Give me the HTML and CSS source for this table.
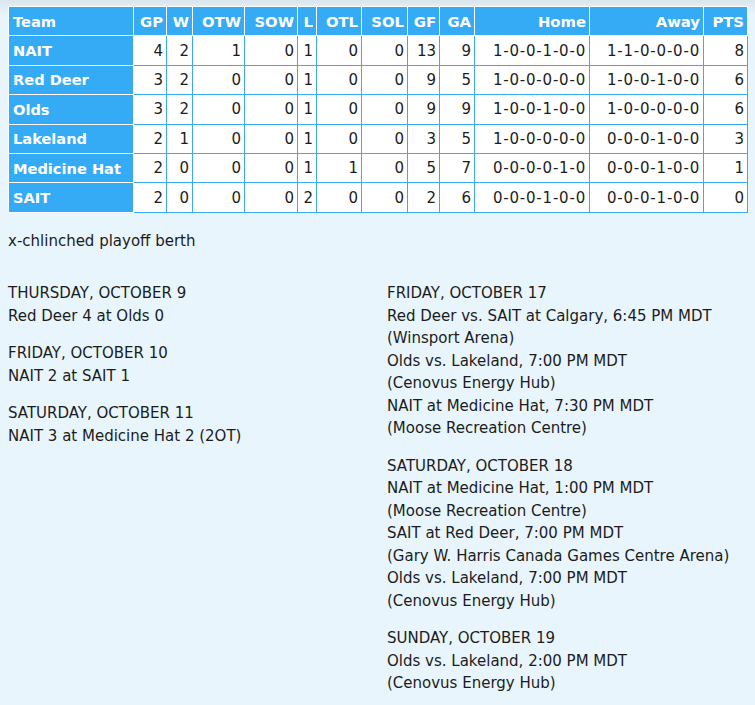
FILE: index.html
```html
<!DOCTYPE html>
<html>
<head>
<meta charset="utf-8">
<link rel="stylesheet" href="styles.css">
</head>
<body>
<table class="standings">
  <colgroup>
    <col class="c-team"><col class="c-gp"><col class="c-w"><col class="c-otw"><col class="c-sow"><col class="c-l"><col class="c-otl"><col class="c-sol"><col class="c-gf"><col class="c-ga"><col class="c-home"><col class="c-away"><col class="c-pts">
  </colgroup>
  <thead>
    <tr><th class="team">Team</th><th>GP</th><th>W</th><th>OTW</th><th>SOW</th><th>L</th><th>OTL</th><th>SOL</th><th>GF</th><th>GA</th><th>Home</th><th>Away</th><th>PTS</th></tr>
  </thead>
  <tbody>
    <tr><td class="team">NAIT</td><td>4</td><td>2</td><td>1</td><td>0</td><td>1</td><td>0</td><td>0</td><td>13</td><td>9</td><td class="rec">1-0-0-1-0-0</td><td class="rec">1-1-0-0-0-0</td><td>8</td></tr>
    <tr><td class="team">Red Deer</td><td>3</td><td>2</td><td>0</td><td>0</td><td>1</td><td>0</td><td>0</td><td>9</td><td>5</td><td class="rec">1-0-0-0-0-0</td><td class="rec">1-0-0-1-0-0</td><td>6</td></tr>
    <tr><td class="team">Olds</td><td>3</td><td>2</td><td>0</td><td>0</td><td>1</td><td>0</td><td>0</td><td>9</td><td>9</td><td class="rec">1-0-0-1-0-0</td><td class="rec">1-0-0-0-0-0</td><td>6</td></tr>
    <tr><td class="team">Lakeland</td><td>2</td><td>1</td><td>0</td><td>0</td><td>1</td><td>0</td><td>0</td><td>3</td><td>5</td><td class="rec">1-0-0-0-0-0</td><td class="rec">0-0-0-1-0-0</td><td>3</td></tr>
    <tr><td class="team">Medicine Hat</td><td>2</td><td>0</td><td>0</td><td>0</td><td>1</td><td>1</td><td>0</td><td>5</td><td>7</td><td class="rec">0-0-0-0-1-0</td><td class="rec">0-0-0-1-0-0</td><td>1</td></tr>
    <tr><td class="team">SAIT</td><td>2</td><td>0</td><td>0</td><td>0</td><td>2</td><td>0</td><td>0</td><td>2</td><td>6</td><td class="rec">0-0-0-1-0-0</td><td class="rec">0-0-0-1-0-0</td><td>0</td></tr>
  </tbody>
</table>

<p class="note">x-chlinched playoff berth</p>

<div class="schedule">
  <div class="col">
    <div class="day">
      <div>THURSDAY, OCTOBER 9</div>
      <div>Red Deer 4 at Olds 0</div>
    </div>
    <div class="day">
      <div>FRIDAY, OCTOBER 10</div>
      <div>NAIT 2 at SAIT 1</div>
    </div>
    <div class="day">
      <div>SATURDAY, OCTOBER 11</div>
      <div>NAIT 3 at Medicine Hat 2 (2OT)</div>
    </div>
  </div>
  <div class="col">
    <div class="day">
      <div>FRIDAY, OCTOBER 17</div>
      <div>Red Deer vs. SAIT at Calgary, 6:45 PM MDT</div>
      <div>(Winsport Arena)</div>
      <div>Olds vs. Lakeland, 7:00 PM MDT</div>
      <div>(Cenovus Energy Hub)</div>
      <div>NAIT at Medicine Hat, 7:30 PM MDT</div>
      <div>(Moose Recreation Centre)</div>
    </div>
    <div class="day">
      <div>SATURDAY, OCTOBER 18</div>
      <div>NAIT at Medicine Hat, 1:00 PM MDT</div>
      <div>(Moose Recreation Centre)</div>
      <div>SAIT at Red Deer, 7:00 PM MDT</div>
      <div>(Gary W. Harris Canada Games Centre Arena)</div>
      <div>Olds vs. Lakeland, 7:00 PM MDT</div>
      <div>(Cenovus Energy Hub)</div>
    </div>
    <div class="day">
      <div>SUNDAY, OCTOBER 19</div>
      <div>Olds vs. Lakeland, 2:00 PM MDT</div>
      <div>(Cenovus Energy Hub)</div>
    </div>
  </div>
</div>
</body>
</html>
```

FILE: styles.css
```css
html, body {
  margin: 0;
  padding: 0;
}
body {
  background: linear-gradient(#dbe5ec 0px, #e8f5fd 14px) no-repeat, #e8f5fd;
  color: #1c1c1c;
  font-family: "DejaVu Sans", Verdana, sans-serif;
  font-size: 15px;
  padding: 6px 8px 8px 8px;
}
.standings {
  border-collapse: collapse;
  table-layout: fixed;
  width: 739px;
}
.standings th,
.standings td {
  height: 29.4px;
  padding: 0 3px 0 4px;
  text-align: right;
  white-space: nowrap;
  box-sizing: border-box;
}
.standings th {
  background: #36abf5;
  color: #fff;
  font-weight: bold;
  font-size: 14.8px;
  border: 1px solid #fff;
}
.standings td {
  background: #fff;
  border: 1px solid #3aaaf3;
}
.standings .team {
  text-align: left;
  background: #36abf5;
  color: #fff;
  font-weight: bold;
  font-size: 14.6px;
  border: 1px solid #fff;
}
.standings td.team {
  border-color: #fff;
}
.standings td.rec {
  letter-spacing: 0.8px;
}
.c-team { width: 125px; }
.c-gp { width: 33px; }
.c-w { width: 26px; }
.c-otw { width: 52px; }
.c-sow { width: 53px; }
.c-l { width: 19px; }
.c-otl { width: 45px; }
.c-sol { width: 46px; }
.c-gf { width: 32px; }
.c-ga { width: 35px; }
.c-home { width: 115px; }
.c-away { width: 114px; }
.c-pts { width: 44px; }

.note {
  margin: 17px 0 30px 0;
  line-height: 22.5px;
}
.schedule {
  display: grid;
  grid-template-columns: 379px 1fr;
}
.col {
  display: flex;
  flex-direction: column;
  gap: 15px;
}
.day {
  line-height: 22.5px;
}
```
